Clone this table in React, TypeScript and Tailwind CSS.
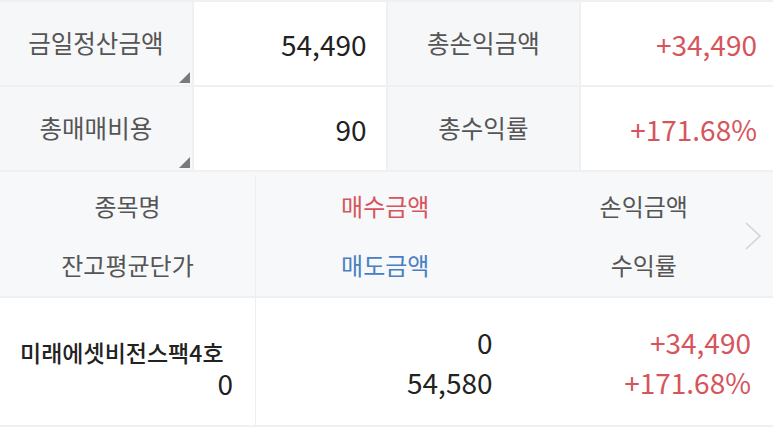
import React from "react";

const font = { fontFamily: '"Noto Sans CJK KR", "Noto Sans", sans-serif' };

function Tri() {
  return (
    <svg className="absolute right-[2px] bottom-[2px]" width="11" height="11" viewBox="0 0 11 11">
      <polygon points="11,0 11,11 0,11" fill="#7a7a7a" />
    </svg>
  );
}

function Label({ children, tri }: { children: React.ReactNode; tri?: boolean }) {
  return (
    <div className="relative bg-[#f6f7f9] flex items-center justify-center text-[24.5px] text-[#555]">
      {children}
      {tri && <Tri />}
    </div>
  );
}

function Value({ children, red, pr }: { children: React.ReactNode; red?: boolean; pr: string }) {
  return (
    <div className={`bg-white flex items-center justify-end ${pr} text-[28px] ${red ? "text-[#d6555c]" : "text-[#222]"}`}>
      {children}
    </div>
  );
}

export default function App() {
  return (
    <div className="w-[773px] h-[436px] bg-white overflow-hidden" style={font}>
      <div className="bg-[#eff0f2] pt-[2px] flex flex-col gap-[2px] pb-[2px]">
        <div className="grid grid-cols-4 gap-x-[2px] h-[83px]">
          <Label tri>금일정산금액</Label>
          <Value pr="pr-[19px]">54,490</Value>
          <Label>총손익금액</Label>
          <Value red pr="pr-[16px]">+34,490</Value>
        </div>
        <div className="grid grid-cols-4 gap-x-[2px] h-[83px]">
          <Label tri>총매매비용</Label>
          <Value pr="pr-[19px]">90</Value>
          <Label>총수익률</Label>
          <Value red pr="pr-[16px]">+171.68%</Value>
        </div>
      </div>
      <div className="relative bg-[#f7f8fa] grid grid-cols-[255px_1px_1fr_1fr] h-[124px] text-[24px] pt-[3px]">
        <div className="flex flex-col items-center justify-center text-[#555]">
          <div className="h-[59px] flex items-center">종목명</div>
          <div className="h-[59px] flex items-center">잔고평균단가</div>
        </div>
        <div className="bg-[#eceef0]" />
        <div className="flex flex-col items-center justify-center">
          <div className="h-[59px] flex items-center text-[#d6555c]">매수금액</div>
          <div className="h-[59px] flex items-center text-[#4a80c2]">매도금액</div>
        </div>
        <div className="flex flex-col items-center justify-center text-[#555]">
          <div className="h-[59px] flex items-center">손익금액</div>
          <div className="h-[59px] flex items-center">수익률</div>
        </div>
        <svg className="absolute right-[11px] top-[50px]" width="18" height="28" viewBox="0 0 18 28">
          <polyline points="2,1 16,14 2,27" fill="none" stroke="#d2d4d7" strokeWidth="1.6" />
        </svg>
      </div>
      <div className="h-[2px] bg-[#eff0f2]" />
      <div className="grid grid-cols-[255px_1px_1fr_1fr] h-[127px] bg-white">
        <div className="flex flex-col justify-center pl-[20px] pr-[22px] pt-[13px]">
          <div className="text-[23px] font-medium text-[#222] leading-[31px]">미래에셋비전스팩4호</div>
          <div className="text-[28px] text-[#222] text-right leading-[31px]">0</div>
        </div>
        <div className="bg-[#eceef0]" />
        <div className="flex flex-col justify-center items-end pr-[22px] text-[28px] text-[#222]">
          <div className="leading-[40px]">0</div>
          <div className="leading-[40px]">54,580</div>
        </div>
        <div className="flex flex-col justify-center items-end pr-[22px] text-[28px] text-[#d6555c]">
          <div className="leading-[40px]">+34,490</div>
          <div className="leading-[40px]">+171.68%</div>
        </div>
      </div>
      <div className="h-[2px] bg-[#eff0f2]" />
    </div>
  );
}
